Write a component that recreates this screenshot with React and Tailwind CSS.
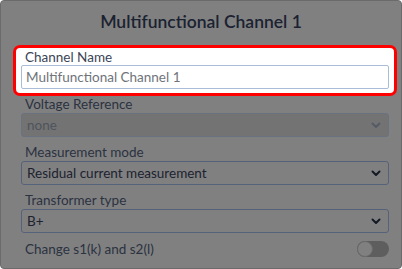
import React from "react";

function Chevron({ className }) {
  return (
    <svg width="12" height="12" viewBox="0 0 12 12" className={className}>
      <path d="M2.5 4.5 L6 8 L9.5 4.5" fill="none" stroke="currentColor" strokeWidth="2" strokeLinecap="round" strokeLinejoin="round" />
    </svg>
  );
}

function SelectField({ label, value, disabled }) {
  return (
    <div className="flex flex-col">
      <div className="h-[18px] leading-[18px] pl-[4px] text-[13.5px] text-[#2b3240]">{label}</div>
      <div
        className={
          "h-[24px] flex items-center justify-between pl-[5px] pr-[6px] rounded-[3px] border " +
          (disabled ? "bg-[#737373] border-[#6a7280] text-[#4e545c]" : "bg-[#808080] border-[#56627a] text-[#1c2230]")
        }
      >
        <span className="text-[13.5px]">{value}</span>
        <Chevron className={disabled ? "text-[#555b66]" : "text-[#141a26]"} />
      </div>
    </div>
  );
}

export default function App() {
  return (
    <div
      className="w-[402px] h-[269px] bg-[#808080] border border-[#6b6b6b] rounded-[4px] overflow-hidden flex flex-col pl-[20px] pr-[12px]"
      style={{ fontFamily: "Lato, 'Noto Sans', sans-serif" }}
    >
      <div className="h-[44px] flex items-center justify-center -ml-[20px] -mr-[12px] text-[17.5px] font-semibold text-[#1b2231] pb-[1px]">
        Multifunctional Channel 1
      </div>
      <div className="-mx-[8px] bg-white border-[3px] border-[#ff0000] rounded-[7px] pt-[1px] pb-[4px] px-[5px] flex flex-col">
        <div className="h-[16px] leading-[16px] pl-[4px] text-[13.5px] text-[#3b4556]">Channel Name</div>
        <div className="h-[24px] flex items-center pl-[4px] border border-[#a9bdd8] rounded-[2px] text-[13.5px] text-[#6f737a]">
          Multifunctional Channel 1
        </div>
      </div>
      <div className="flex flex-col gap-[6px] -mt-[1px]">
        <SelectField label="Voltage Reference" value="none" disabled />
        <SelectField label="Measurement mode" value="Residual current measurement" />
        <SelectField label="Transformer type" value="B+" />
        <div className="flex items-center justify-between h-[20px]">
          <span className="pl-[4px] text-[13.5px] text-[#2b3240]">Change s1(k) and s2(l)</span>
          <div className="w-[32px] h-[16px] rounded-full bg-[#5e5e5e] relative">
            <div className="absolute left-0 top-0 w-[16px] h-[16px] rounded-full bg-[#808080] border border-[#6a6a6a]" />
          </div>
        </div>
      </div>
    </div>
  );
}
